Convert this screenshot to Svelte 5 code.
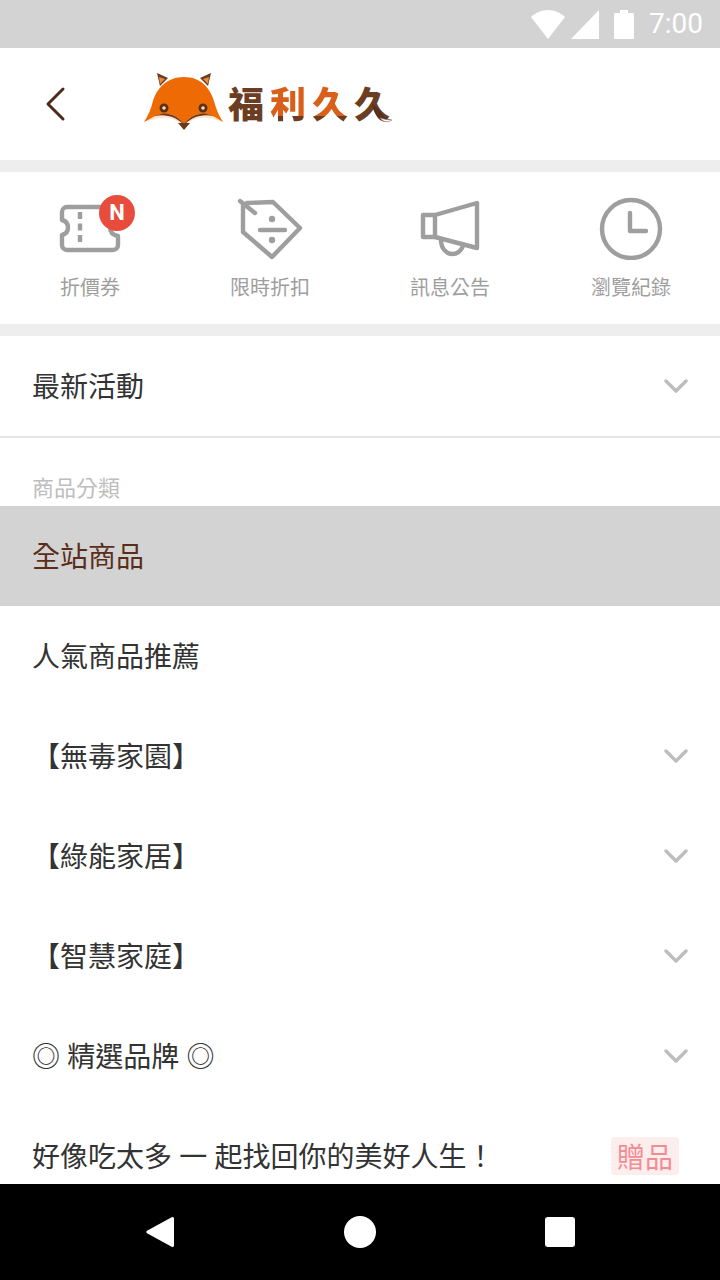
<script lang="ts">
	type Row = { label: string; arrow?: boolean; active?: boolean; tag?: string };

	// 圖示列
	const shortcuts = ['折價券', '限時折扣', '訊息公告', '瀏覽紀錄'];

	const rows: Row[] = [
		{ label: '全站商品', active: true },
		{ label: '人氣商品推薦' },
		{ label: '【無毒家園】', arrow: true },
		{ label: '【綠能家居】', arrow: true },
		{ label: '【智慧家庭】', arrow: true },
		{ label: '◎ 精選品牌 ◎', arrow: true },
		{ label: '好像吃太多 一 起找回你的美好人生！', tag: '贈品' }
	];
</script>

{#snippet chevron()}
	<svg class="chevron" width="24" height="14" viewBox="0 0 24 14" aria-hidden="true">
		<path d="M2 2l10 10L22 2" fill="none" stroke="#bdbdbd" stroke-width="3.4" stroke-linecap="round" stroke-linejoin="round" />
	</svg>
{/snippet}

<div class="phone">
	<div class="status">
		<svg width="34" height="29" viewBox="0 0 34 29" aria-hidden="true">
			<path d="M0 7C4.500 2.800 10.500 0 17 0s12.500 2.800 17 7L17 29z" fill="#fff" />
		</svg>
		<svg class="signal" width="28" height="29" viewBox="0 0 28 29" aria-hidden="true">
			<path d="M0 29L28 0v29z" fill="#fff" />
		</svg>
		<svg class="battery" width="20" height="29" viewBox="0 0 20 29" aria-hidden="true">
			<path d="M6 0h8v3h5a1 1 0 0 1 1 1v24a1 1 0 0 1-1 1H1a1 1 0 0 1-1-1V4a1 1 0 0 1 1-1h5z" fill="#fff" />
		</svg>
		<span class="time">7:00</span>
	</div>

	<header class="top">
		<svg class="back" width="24" height="36" viewBox="0 0 24 36" aria-hidden="true">
			<path d="M19 3L4 18l15 15" fill="none" stroke="#4e2a1c" stroke-width="3" stroke-linecap="round" stroke-linejoin="round" />
		</svg>
		<div class="logo">
			<svg width="84" height="62" viewBox="142 71 84 62" aria-hidden="true">
				<path d="M157 73l11 5-8 8z" fill="#6b3a1c" />
				<path d="M211 73l-11 5 8 8z" fill="#6b3a1c" />
				<path d="M159 77l6 2-5 5z" fill="#e98a3d" />
				<path d="M209 77l-6 2 5 5z" fill="#e98a3d" />
				<path d="M184 77c-17 0-27 11-31 24-2 8-5 15-9 21 8-4 16-7 24-6 7 1 12 6 16 13 4-7 9-12 16-13 8-1 16 2 23 6-4-6-7-13-9-21-4-13-13-24-30-24z" fill="#ee6a05" />
				<path d="M146 122c7-6 15-9 22-8 7 1 12 5 16 10 4-5 9-9 16-10 7-1 15 2 22 8-7-3-15-5-22-4-7 1-12 5-16 11-4-6-9-10-16-11-7-1-15 1-22 4z" fill="#fde4d0" />
				<path d="M155 116c5-2 9-3 13-2 7 1 12 5 16 10 4-5 9-9 16-10 4-1 8 0 13 2-5-1-9-1-13 0-7 1-12 5-16 9-4-4-9-8-16-9-4-1-8-1-13 0z" fill="#6b3a1c" />
				<path d="M178 123h12l-6 7z" fill="#6b3a1c" />
				<circle cx="164" cy="108" r="4.500" fill="#5a3018" />
				<circle cx="164" cy="108" r="1.800" fill="#f6d9b8" />
				<circle cx="203" cy="108" r="4.500" fill="#5a3018" />
				<circle cx="203" cy="108" r="1.800" fill="#f6d9b8" />
			</svg>
			<div class="wordmark">
				<span class="dark">福</span><span class="orange">利</span><span class="orange">久</span><span class="dark">久</span>
				<svg class="tail" width="22" height="20" viewBox="0 0 22 20" aria-hidden="true">
					<path d="M1 0c5 3 8 6 10 10 2 3 5 5 10 6-5 3-11 2-14-2C4 10 2 6 1 0z" fill="#5a3018" />
					<path d="M9 14c3 1 8 2 12 2-4 3-9 2-12-2z" fill="#fff" stroke="#9a8a80" stroke-width=".6" />
				</svg>
			</div>
		</div>
	</header>

	<nav class="shortcuts">
		{#each shortcuts as name, i}
			<div class="shortcut">
				<div class="icon">
					{#if i === 0}
						<svg width="80" height="68" viewBox="50 192 80 68" aria-hidden="true">
							<path d="M110 207H67a5 5 0 0 0-5 5v8c4 1 6 3.500 6 7.500s-2 6.500-6 7.500v10a5 5 0 0 0 5 5h46a5 5 0 0 0 5-5v-9c-5-1-8-4-8-8.500s2-7 6-8" fill="none" stroke="#9e9e9e" stroke-width="4.400" stroke-linejoin="round" />
							<path d="M80 212v34" stroke="#9e9e9e" stroke-width="4.400" stroke-dasharray="7 4.500" fill="none" />
						</svg>
						<span class="badge">N</span>
					{:else if i === 1}
						<svg width="80" height="68" viewBox="230 192 80 68" aria-hidden="true">
							<path d="M247 203l26-1 27 26-28 29-29-25v-27" fill="none" stroke="#9e9e9e" stroke-width="4.400" stroke-linecap="round" stroke-linejoin="round" />
							<path d="M240 201l15 12M260 230h25" fill="none" stroke="#9e9e9e" stroke-width="4.400" stroke-linecap="round" />
							<circle cx="272" cy="219" r="3.200" fill="#9e9e9e" />
							<circle cx="272" cy="240" r="3.200" fill="#9e9e9e" />
						</svg>
					{:else if i === 2}
						<svg width="80" height="68" viewBox="410 192 80 68" aria-hidden="true">
							<path d="M423 215h12v22h-12zM435 215l42-12v45l-42-11z" fill="none" stroke="#9e9e9e" stroke-width="4.400" stroke-linejoin="round" />
							<path d="M441 240c0 9 6 14 11 14s9-3 11-8" fill="none" stroke="#9e9e9e" stroke-width="4.400" />
						</svg>
					{:else}
						<svg width="80" height="68" viewBox="591 192 80 68" aria-hidden="true">
							<circle cx="631" cy="229" r="29" fill="none" stroke="#9e9e9e" stroke-width="4.400" />
							<path d="M630 213v18h16" fill="none" stroke="#9e9e9e" stroke-width="4.400" stroke-linecap="round" stroke-linejoin="round" />
						</svg>
					{/if}
				</div>
				<span class="name">{name}</span>
			</div>
		{/each}
	</nav>

	<div class="list">
		<div class="row latest">
			<span>最新活動</span>
			{@render chevron()}
		</div>
		<div class="caption">商品分類</div>
		{#each rows as row}
			<div class="row" class:active={row.active}>
				<span class="label">{row.label}</span>
				{#if row.arrow}
					{@render chevron()}
				{/if}
				{#if row.tag}
					<span class="tag">{row.tag}</span>
				{/if}
			</div>
		{/each}
	</div>

	<div class="softkeys">
		<svg width="28" height="32" viewBox="0 0 28 32" aria-hidden="true">
			<path d="M28 2.500v27a1.500 1.500 0 0 1-2.300 1.300L1 17.200a1.400 1.400 0 0 1 0-2.400L25.700 1.200a1.500 1.500 0 0 1 2.300 1.300z" fill="#fff" />
		</svg>
		<span class="home"></span>
		<span class="recent"></span>
	</div>
</div>

<style>
	:global(body) {
		margin: 0;
		background: #fff;
	}

	.phone {
		display: flex;
		flex-direction: column;
		width: 720px;
		height: 1280px;
		overflow: hidden;
		font-family: 'Noto Sans CJK TC', 'Noto Sans', sans-serif;
		color: #333;
		background: #fff;
	}

	.status {
		display: flex;
		align-items: center;
		flex: none;
		height: 48px;
		padding-right: 17px;
		box-sizing: border-box;
		justify-content: flex-end;
		background: #d3d3d3;
	}

	.signal {
		margin-left: 6px;
	}

	.battery {
		margin-left: 15px;
	}

	.time {
		margin-left: 15px;
		font-family: Roboto, sans-serif;
		font-size: 28px;
		line-height: 48px;
		color: #fff;
	}

	.top {
		display: flex;
		align-items: center;
		flex: none;
		height: 112px;
		padding-left: 44px;
		box-sizing: border-box;
	}

	.back {
		flex: none;
	}

	.logo {
		display: flex;
		align-items: center;
		margin-left: 74px;
		margin-bottom: 4px;
	}

	.wordmark {
		position: relative;
		margin-left: 2px;
		font-size: 36px;
		font-weight: 900;
		letter-spacing: 6px;
		line-height: 44px;
		white-space: nowrap;
	}

	.dark {
		color: #6b3d22;
	}

	.orange {
		background: linear-gradient(#d9601a 77%, #6b3d22 77%);
		-webkit-background-clip: text;
		background-clip: text;
		color: transparent;
	}

	.tail {
		position: absolute;
		right: 3px;
		bottom: 0;
	}

	.shortcuts {
		display: grid;
		flex: none;
		grid-template-columns: repeat(4, 180px);
		height: 152px;
		margin: 12px 0;
		box-shadow: 0 -12px 0 #eee, 0 12px 0 #eee;
	}

	.shortcut {
		display: flex;
		flex-direction: column;
		align-items: center;
		padding-top: 20px;
	}

	.shortcut:last-child {
		padding-left: 2px;
		box-sizing: border-box;
	}

	.icon {
		position: relative;
		width: 80px;
		height: 68px;
	}

	.icon svg {
		display: block;
	}

	.badge {
		position: absolute;
		top: 3px;
		left: 49px;
		width: 36px;
		height: 36px;
		border-radius: 50%;
		background: #e74c3c;
		color: #fff;
		font-family: Roboto, sans-serif;
		font-size: 22px;
		font-weight: 700;
		line-height: 36px;
		text-align: center;
	}

	.name {
		margin-top: 13px;
		font-size: 20px;
		line-height: 28px;
		color: #9e9e9e;
	}

	.list {
		flex: 1;
		min-height: 0;
		overflow: hidden;
	}

	.row {
		display: flex;
		align-items: center;
		justify-content: space-between;
		height: 100px;
		padding: 0 32px;
		box-sizing: border-box;
		font-size: 28px;
		word-spacing: 1px;
		white-space: nowrap;
		color: #333;
	}

	.row > span:first-child {
		position: relative;
		top: -1px;
	}

	.latest {
		height: 102px;
		border-bottom: 2px solid #e6e6e6;
	}

	.active {
		background: #d3d3d3;
		color: #5a2d1a;
	}

	.chevron {
		flex: none;
	}

	.caption {
		padding: 33px 32px 0;
		height: 68px;
		box-sizing: border-box;
		font-size: 22px;
		line-height: 30px;
		color: #bdbdbd;
	}

	.tag {
		margin-right: 9px;
		padding: 0 6px;
		border-radius: 4px;
		background: #fdeeee;
		color: #f48b93;
		font-size: 28px;
		line-height: 38px;
	}

	.softkeys {
		display: flex;
		align-items: center;
		flex: none;
		height: 96px;
		background: #000;
		padding-left: 146px;
		box-sizing: border-box;
	}

	.home {
		width: 32px;
		height: 32px;
		margin-left: 170px;
		border-radius: 50%;
		background: #fff;
	}

	.recent {
		width: 30px;
		height: 30px;
		margin-left: 169px;
		border-radius: 3px;
		background: #fff;
	}
</style>
